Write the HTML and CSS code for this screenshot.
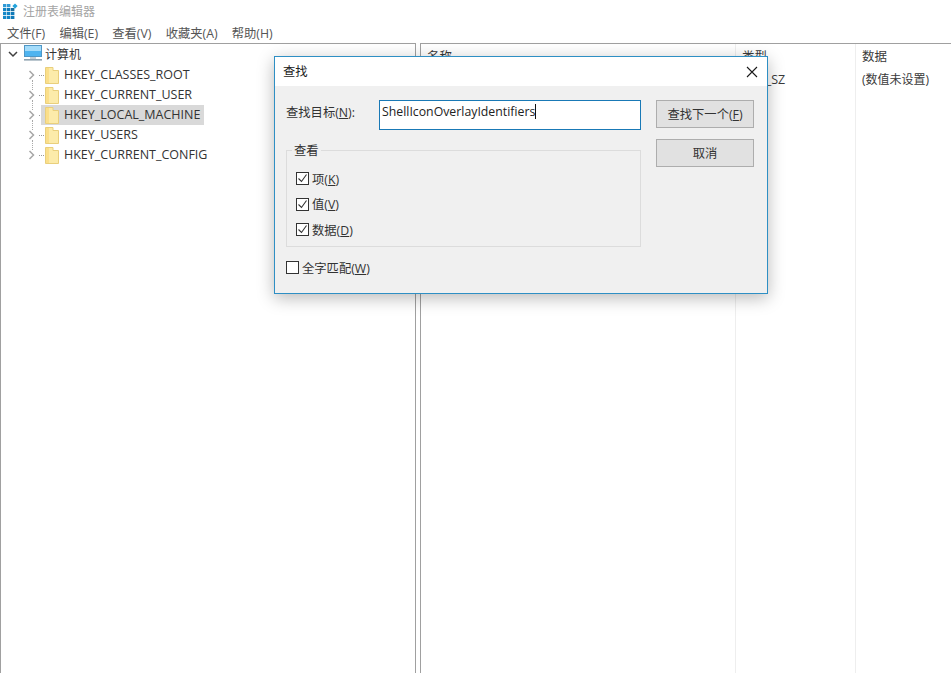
FILE: index.html
```html
<!DOCTYPE html>
<html lang="zh-CN">
<head>
<meta charset="utf-8">
<title>注册表编辑器</title>
<link rel="stylesheet" href="styles.css">
</head>
<body>
<div class="app">
  <header class="titlebar">
    <svg class="app-icon" width="16" height="16" viewBox="0 0 16 16">
      <rect x="1" y="5" width="3.4" height="3.2" fill="#1284c4"/><rect x="5" y="5" width="3.4" height="3.2" fill="#0f7ab8"/><rect x="9" y="5" width="3.4" height="3.2" fill="#1b6f9e"/>
      <rect x="1" y="9" width="3.4" height="3.2" fill="#1588c8"/><rect x="5" y="9" width="3.4" height="3.2" fill="#1284c4"/><rect x="9" y="9" width="3.4" height="3.2" fill="#0f7ab8"/>
      <rect x="1" y="13" width="3.4" height="3" fill="#1588c8"/><rect x="5" y="13" width="3.4" height="3" fill="#1284c4"/><rect x="9" y="13" width="3.4" height="3" fill="#0f7ab8"/>
      <rect x="1" y="1" width="3.4" height="3.2" fill="#2f9ad6"/><rect x="5" y="1" width="3.4" height="3.2" fill="#2f9ad6"/>
      <path d="M13 0.5l2.6 2.6-2.6 2.6-2.6-2.6z" fill="#22a3dc"/>
    </svg>
    <span class="app-title">注册表编辑器</span>
  </header>
  <nav class="menubar">
    <span class="menu-item">文件(F)</span>
    <span class="menu-item">编辑(E)</span>
    <span class="menu-item">查看(V)</span>
    <span class="menu-item">收藏夹(A)</span>
    <span class="menu-item">帮助(H)</span>
  </nav>
  <main class="panes">
    <section class="tree">
      <div class="tree-root">
        <svg class="chev" width="10" height="10" viewBox="0 0 10 10"><path d="M1 3l4 4 4-4" fill="none" stroke="#404040" stroke-width="1.5"/></svg>
        <svg class="pc" width="24" height="20" viewBox="0 0 24 20">
          <rect x="3.5" y="1.5" width="17" height="11" fill="#4fb4f0" stroke="#4f97c6"/>
          <rect x="4" y="2" width="16" height="5" fill="#a4dcfa"/>
          <rect x="9" y="13" width="6" height="2" fill="#c3ced6"/>
          <rect x="3" y="15" width="18" height="1.6" fill="#8fa3b0"/>
        </svg>
        <span class="root-label">计算机</span>
      </div>
      <div class="tree-row">
        <svg class="chev-r" width="8" height="10" viewBox="0 0 8 10"><path d="M1.5 1l4 4-4 4" fill="none" stroke="#a6a6a6" stroke-width="1.5"/></svg>
        <i class="dots"></i><svg class="folder" width="14" height="17" viewBox="0 0 14 17"><path d="M.5 16.5V.5H8V3.5H13.5V16.5Z" fill="#fcebaa" stroke="#e9cf7c"/><path d="M1 1H4V16H1Z" fill="#fbdf8a"/></svg><span class="key">HKEY_CLASSES_ROOT</span>
      </div>
      <div class="tree-row">
        <svg class="chev-r" width="8" height="10" viewBox="0 0 8 10"><path d="M1.5 1l4 4-4 4" fill="none" stroke="#a6a6a6" stroke-width="1.5"/></svg>
        <i class="dots"></i><svg class="folder" width="14" height="17" viewBox="0 0 14 17"><path d="M.5 16.5V.5H8V3.5H13.5V16.5Z" fill="#fcebaa" stroke="#e9cf7c"/><path d="M1 1H4V16H1Z" fill="#fbdf8a"/></svg><span class="key">HKEY_CURRENT_USER</span>
      </div>
      <div class="tree-row">
        <svg class="chev-r" width="8" height="10" viewBox="0 0 8 10"><path d="M1.5 1l4 4-4 4" fill="none" stroke="#a6a6a6" stroke-width="1.5"/></svg>
        <i class="dots"></i><svg class="folder" width="14" height="17" viewBox="0 0 14 17"><path d="M.5 16.5V.5H8V3.5H13.5V16.5Z" fill="#fcebaa" stroke="#e9cf7c"/><path d="M1 1H4V16H1Z" fill="#fbdf8a"/></svg><span class="key selected">HKEY_LOCAL_MACHINE</span>
      </div>
      <div class="tree-row">
        <svg class="chev-r" width="8" height="10" viewBox="0 0 8 10"><path d="M1.5 1l4 4-4 4" fill="none" stroke="#a6a6a6" stroke-width="1.5"/></svg>
        <i class="dots"></i><svg class="folder" width="14" height="17" viewBox="0 0 14 17"><path d="M.5 16.5V.5H8V3.5H13.5V16.5Z" fill="#fcebaa" stroke="#e9cf7c"/><path d="M1 1H4V16H1Z" fill="#fbdf8a"/></svg><span class="key">HKEY_USERS</span>
      </div>
      <div class="tree-row last">
        <svg class="chev-r" width="8" height="10" viewBox="0 0 8 10"><path d="M1.5 1l4 4-4 4" fill="none" stroke="#a6a6a6" stroke-width="1.5"/></svg>
        <i class="dots"></i><svg class="folder" width="14" height="17" viewBox="0 0 14 17"><path d="M.5 16.5V.5H8V3.5H13.5V16.5Z" fill="#fcebaa" stroke="#e9cf7c"/><path d="M1 1H4V16H1Z" fill="#fbdf8a"/></svg><span class="key">HKEY_CURRENT_CONFIG</span>
      </div>
    </section>
    <section class="list">
      <div class="col col-name">
        <div class="cell head">名称</div>
        <div class="cell">(默认)</div>
      </div>
      <div class="col col-type">
        <div class="cell head">类型</div>
        <div class="cell">REG_SZ</div>
      </div>
      <div class="col col-data">
        <div class="cell head">数据</div>
        <div class="cell data-value">(数值未设置)</div>
      </div>
    </section>
  </main>
</div>

<div class="dialog">
  <div class="dlg-title">
    <span class="dlg-name">查找</span>
    <svg class="close" width="12" height="12" viewBox="0 0 12 12"><path d="M1 1l10 10M11 1L1 11" stroke="#1a1a1a" stroke-width="1.1" fill="none"/></svg>
  </div>
  <div class="dlg-body">
    <div class="dlg-main">
      <div class="find-row">
        <label class="find-label">查找目标(<u>N</u>):</label>
        <div class="find-input">ShellIconOverlayIdentifiers<i class="caret"></i></div>
      </div>
      <fieldset class="group">
        <legend>查看</legend>
        <div class="check"><i class="box on"><svg width="11" height="11" viewBox="0 0 11 11"><path d="M1.5 5.5l3 3 5-7" fill="none" stroke="#333" stroke-width="1.1"/></svg></i><span>项(<u>K</u>)</span></div>
        <div class="check"><i class="box on"><svg width="11" height="11" viewBox="0 0 11 11"><path d="M1.5 5.5l3 3 5-7" fill="none" stroke="#333" stroke-width="1.1"/></svg></i><span>值(<u>V</u>)</span></div>
        <div class="check"><i class="box on"><svg width="11" height="11" viewBox="0 0 11 11"><path d="M1.5 5.5l3 3 5-7" fill="none" stroke="#333" stroke-width="1.1"/></svg></i><span>数据(<u>D</u>)</span></div>
      </fieldset>
      <div class="check whole"><i class="box"></i><span>全字匹配(<u>W</u>)</span></div>
    </div>
    <div class="dlg-buttons">
      <button class="btn">查找下一个(<u>F</u>)</button>
      <button class="btn">取消</button>
    </div>
  </div>
</div>
</body>
</html>
```

FILE: styles.css
```css
* { box-sizing: border-box; }
html, body { margin: 0; height: 100%; overflow: hidden; }
body {
  width: 951px;
  height: 673px;
  background: #fff;
  color: #3a3a3a;
  font-family: "Open Sans", "Noto Sans CJK SC", sans-serif;
  font-size: 12.3px;
  position: relative;
}
.app { display: flex; flex-direction: column; height: 673px; }
.titlebar { height: 22px; display: flex; align-items: center; padding-left: 2px; gap: 5px; flex: none; }
.app-icon { flex: none; }
.app-title { color: #a4a4a4; font-size: 12px; }
.menubar { height: 21px; display: flex; align-items: center; padding-left: 7px; gap: 14.2px; flex: none; color: #555; }
.panes { flex: 1; display: flex; min-height: 0; }
.tree {
  width: 416px; flex: none;
  border-top: 1px solid #a0a0a0;
  border-left: 1px solid #a0a0a0;
  border-right: 1px solid #a0a0a0;
}
.tree-root { height: 21px; display: flex; align-items: center; padding: 0 0 1px 7px; }
.chev { flex: none; }
.pc { flex: none; margin-left: 3px; }
.root-label { color: #333; font-size: 12px; margin-top: -1px; }
.tree-row { height: 20px; display: flex; align-items: center; padding-left: 27px; position: relative; }
.tree-row::before {
  content: ""; position: absolute; left: 31px; top: 15px; height: 10px;
  border-left: 1px dotted #aaa;
}
.tree-row.last::before { display: none; }
.chev-r { flex: none; }
.dots { width: 5px; height: 1px; margin-left: 3px; flex: none; border-top: 1px dotted #999; }
.folder { margin-left: 1px; flex: none; position: relative; z-index: 1; }
.key { font-size: 12.5px; padding: 0 4px 0 5px; line-height: 20px; color: #333; }
.selected { background: #d9d9d9; margin-left: -18px; padding-left: 23px; }
.list {
  flex: 1; display: flex; margin-left: 4px;
  border-top: 1px solid #a0a0a0;
  border-left: 1px solid #a0a0a0;
}
.col { border-right: 1px solid #eeeeee; flex: none; padding-top: 2px; }
.col-name { width: 315px; }
.col-type { width: 120px; }
.col-data { flex: 1; border-right: 0; }
.cell { height: 23px; line-height: 22px; padding-left: 6px; color: #3a3a3a; font-size: 12.5px; }
.data-value { font-size: 12px; }
.head { height: 23px; }
.dialog {
  position: absolute; left: 274px; top: 56px;
  width: 494px; height: 238px;
  border: 1px solid #2e8fc4;
  background: #f0f0f0;
  box-shadow: 0 4px 16px rgba(0,0,0,.28);
  display: flex; flex-direction: column;
}
.dlg-title { height: 29px; background: #fff; flex: none; display: flex; align-items: center; justify-content: space-between; padding: 0 9px 0 8px; color: #222; }
.dlg-name { margin-top: -2px; }
.dlg-body { flex: 1; display: flex; padding: 14px 14px 0 11px; gap: 15px; }
.dlg-main { width: 355px; flex: none; }
.find-row { display: flex; align-items: flex-start; height: 30px; }
.find-label { width: 93px; flex: none; color: #333; line-height: 26px; }
.find-input {
  width: 262px; height: 30px; background: #fff;
  border: 1px solid #1979b6;
  padding: 0 0 8px 2px; color: #222;
  display: flex; align-items: center;
}
.caret { width: 1px; height: 15px; background: #111; }
.group {
  margin: 12px 0 0; padding: 8px 0 0 9px;
  height: 105px; width: 355px;
  border: 1px solid #dcdcdc;
}
.group legend { padding: 2px 2px 0; margin: 0 0 0 -4px; color: #333; line-height: 14px; }
.check { display: flex; align-items: center; height: 25.5px; gap: 3px; color: #333; }
.box { width: 13px; height: 13px; border: 1px solid #333; background: #fff; display: flex; align-items: center; justify-content: center; flex: none; }
.whole { margin-top: 8px; }
.dlg-buttons { display: flex; flex-direction: column; gap: 11px; }
.btn {
  width: 98px; height: 28px; padding: 0;
  background: #e1e1e1; border: 1px solid #adadad;
  font: inherit; color: #333;
}
```
